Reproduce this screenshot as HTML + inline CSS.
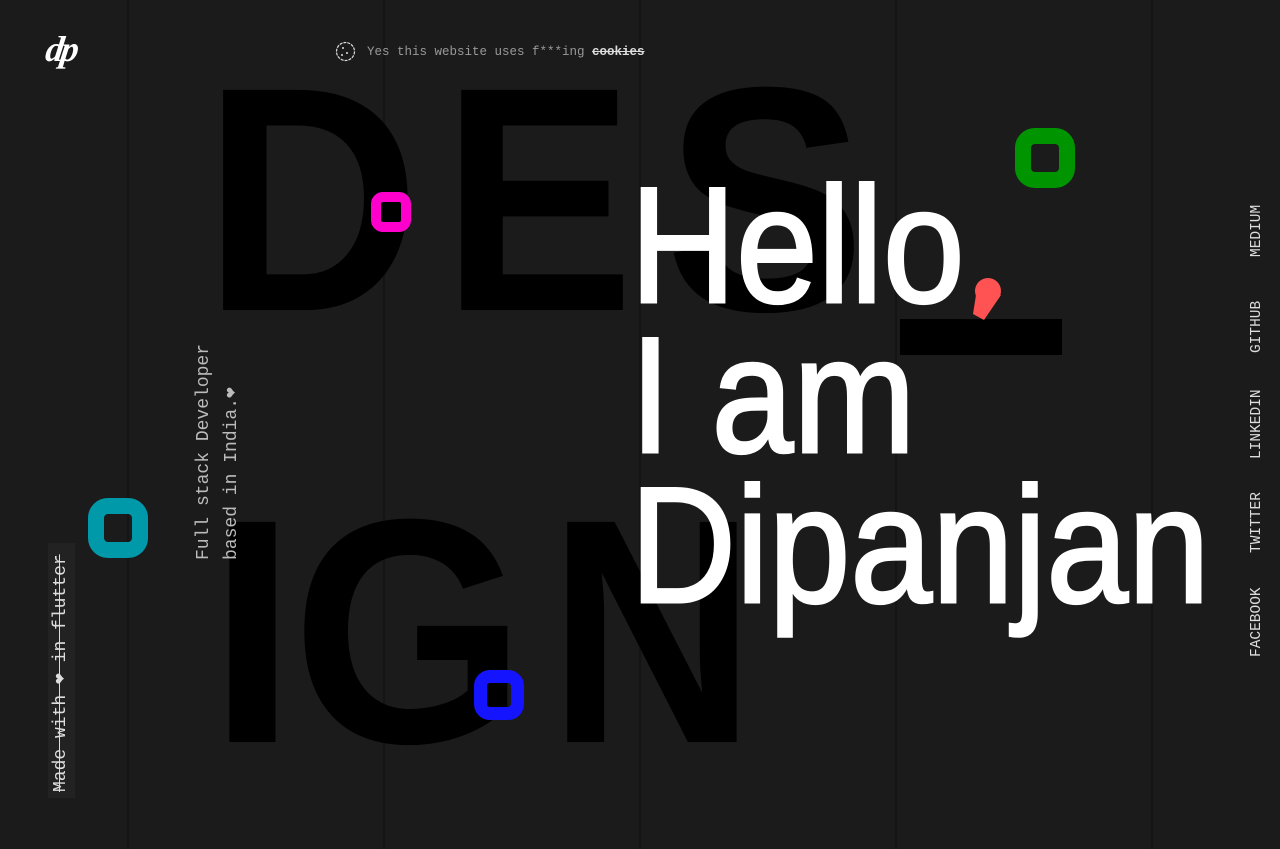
<!DOCTYPE html>
<html><head><meta charset="utf-8"><style>
*{margin:0;padding:0;box-sizing:border-box}
body{width:1280px;height:849px;background:#1b1b1b;overflow:hidden;position:relative;font-family:"Liberation Sans",sans-serif}
.g{position:absolute;top:0;width:2px;height:849px;background:#141414}
.big{position:absolute;font-size:320px;line-height:1;color:#000;font-weight:bold;font-family:"Liberation Sans",sans-serif}
.ring{position:absolute;border-style:solid;}
.hl{position:absolute;left:630px;font-size:165px;line-height:1;color:#fff;-webkit-text-stroke:3px #fff;letter-spacing:0px;transform:scaleX(0.89);transform-origin:left;white-space:nowrap}
.mono{font-family:"Liberation Mono","DejaVu Sans Mono",monospace}
.rot{position:absolute;transform:rotate(-90deg);transform-origin:left top;white-space:nowrap}
.nav{position:absolute;left:1249px;font-size:14.5px;color:#ddd;width:16px}
.nav span{position:absolute;left:0;transform:rotate(-90deg);transform-origin:left top;white-space:nowrap}
</style></head><body>
<div class="g" style="left:127px"></div>
<div class="g" style="left:383px"></div>
<div class="g" style="left:639px"></div>
<div class="g" style="left:895px"></div>
<div class="g" style="left:1151px"></div>

<div class="big" style="left:203px;top:39px;transform:scaleX(0.94);transform-origin:left">D</div>
<div class="big" style="left:442px;top:39px;transform:scaleX(0.9);transform-origin:left">E</div>
<div class="big" style="left:665px;top:39px;transform:scaleX(0.94);transform-origin:left">S</div>
<div style="position:absolute;left:900px;top:319px;width:162px;height:36px;background:#000"></div>
<div class="big" style="left:208px;top:471px">I</div>
<div class="big" style="left:292px;top:471px;transform:scaleX(0.94);transform-origin:left">G</div>
<div class="big" style="left:548px;top:471px;transform:scaleX(0.9);transform-origin:left">N</div>

<div class="ring" style="left:371px;top:192px;width:40px;height:40px;border-width:10px;border-radius:12px;border-color:#f0c"></div>
<div class="ring" style="left:1015px;top:128px;width:60px;height:60px;border-width:16px;border-radius:20px;border-color:#009400"></div>
<div class="ring" style="left:88px;top:498px;width:60px;height:60px;border-width:16px;border-radius:20px;border-color:#0099aa"></div>
<div class="ring" style="left:474px;top:670px;width:50px;height:50px;border-width:13px;border-radius:16px;border-color:#1414ff"></div>

<div class="hl" style="top:163px">Hello</div>
<div style="position:absolute;left:968px;top:275px;width:40px;height:48px"><svg width="40" height="48" viewBox="0 0 40 48"><circle cx="20" cy="16" r="13" fill="#ff5252"/><path d="M8 20 L33 20 L16 45 L5 39 Z" fill="#ff5252"/></svg></div>
<div class="hl" style="top:313px">I am</div>
<div class="hl" style="top:463px">Dipanjan</div>

<div style="position:absolute;left:46px;top:28px;color:#fff;font-family:'Liberation Serif',serif;font-style:italic;font-weight:bold;font-size:36px;letter-spacing:-3px;transform:skewX(-8deg)">dp</div>

<svg style="position:absolute;left:335px;top:41px" width="21" height="21" viewBox="0 0 21 21"><circle cx="10.5" cy="10.5" r="9" fill="none" stroke="#ddd" stroke-width="1.2" stroke-dasharray="3 1"/><circle cx="8" cy="7" r="1" fill="#ddd"/><circle cx="12" cy="12" r="1" fill="#ddd"/><circle cx="7" cy="14" r="1" fill="#ddd"/></svg>
<div class="mono" style="position:absolute;left:367px;top:45px;font-size:12.5px;color:#999;white-space:nowrap">Yes this website uses f***ing <b style="color:#ddd;text-decoration:line-through">cookies</b></div>

<div class="rot mono" style="left:48px;top:798px;width:255px;height:27px;background:#222;color:#ddd;font-size:18px;line-height:27px;padding-left:6px;text-decoration:line-through">Made with ❤ in flutter</div>

<div class="rot mono" style="left:190px;top:560px;color:#bbb;font-size:18px;line-height:28px">Full stack Developer<br>based in India.❤</div>

<div class="nav mono" style="top:0">
<span style="top:257px">MEDIUM</span>
<span style="top:353px">GITHUB</span>
<span style="top:459px">LINKEDIN</span>
<span style="top:553px">TWITTER</span>
<span style="top:657px">FACEBOOK</span>
</div>
</body></html>
